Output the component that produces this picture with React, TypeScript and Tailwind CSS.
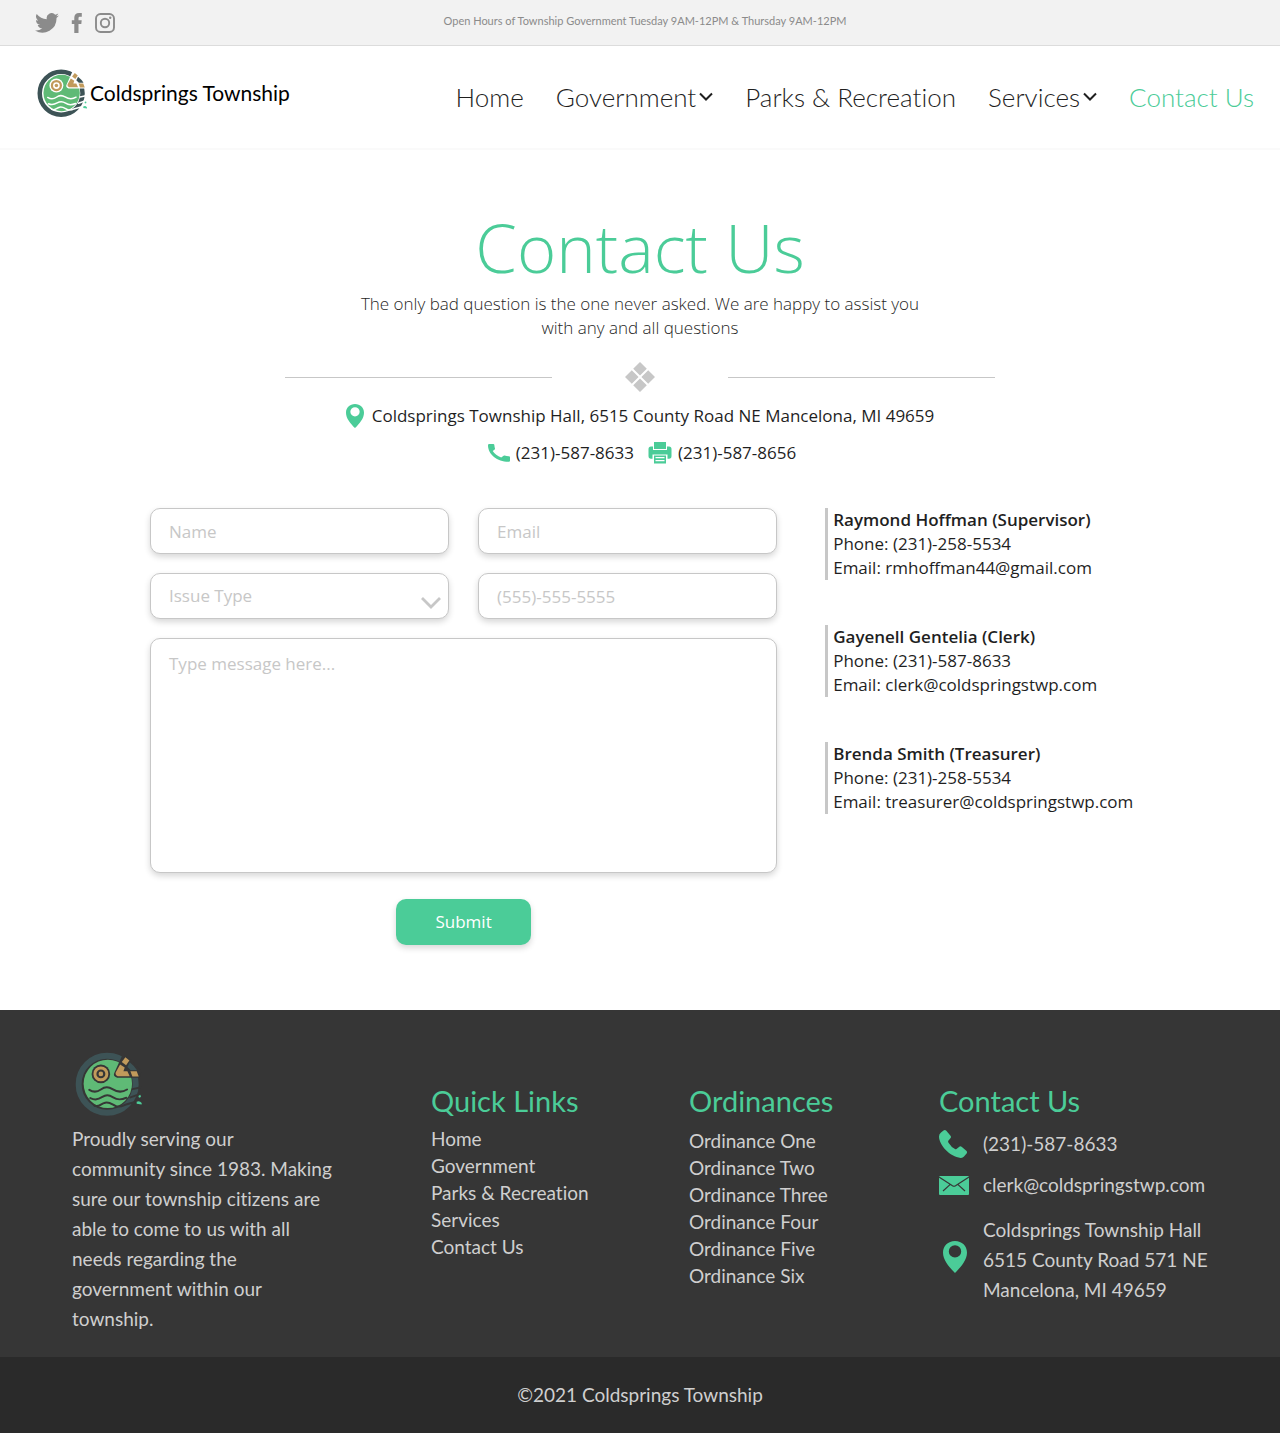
import React from "react";

const links = ["Home", "Government", "Parks & Recreation", "Services", "Contact Us"];
const ordinances = ["One", "Two", "Three", "Four", "Five", "Six"];
const officers = [
  { name: "Raymond Hoffman (Supervisor)", phone: "(231)-258-5534", email: "rmhoffman44@gmail.com" },
  { name: "Gayenell Gentelia (Clerk)", phone: "(231)-587-8633", email: "clerk@coldspringstwp.com" },
  { name: "Brenda Smith (Treasurer)", phone: "(231)-258-5534", email: "treasurer@coldspringstwp.com" },
];

function Logo({ gap, className }: { gap: string; className: string }) {
  return (
    <svg viewBox="45 37 205 196" className={className} aria-hidden="true">
      <circle cx="142" cy="134" r="86" fill="none" stroke="#3d5356" strokeWidth="18" />
      <circle cx="144" cy="133" r="73" fill="#5fba76" />
      <circle cx="123" cy="103" r="28" fill={gap} />
      <circle cx="123" cy="103" r="18" fill="none" stroke="#c19a5b" strokeWidth="9" />
      <circle cx="123" cy="103" r="7" fill="#c19a5b" />
      <path d="M188 46 L212 58 L246 96 L240 115 L172 115 Q158 110 164 99 Z" fill={gap} />
      <path d="M197 53 L209 63 L199 77 L186 67 Z" fill="#c19a5b" />
      <path d="M181 75 L195 84 L191 95 L203 95 L210 110 L174 110 Q165 106 168 98 Z" fill="#c19a5b" />
      <path d="M212 95 L231 95 L237 111 L218 111 Z" fill="#c19a5b" />
      <path d="M210 68 Q224 79 232 92 L213 92 L203 82 Z" fill="#3d5356" />
      <g fill="none" stroke={gap} strokeWidth="6" strokeLinecap="round">
        <path d="M88 151 C102 160 112 158 123 150 S144 140 158 149 S186 160 202 150" />
        <path d="M91 176 C106 183 114 180 126 173 S146 165 160 174 S184 182 200 175" />
        <path d="M104 199 C118 204 122 193 136 190 S158 196 168 200 S184 202 194 197" />
        <path d="M218 149 L242 144" />
        <path d="M212 174 L240 164" />
        <path d="M196 196 L226 188" />
      </g>
      <path d="M236 170 L242 166 L244 173 L238 175 Z M231 187 Q240 183 246 191 L246 195 L231 193 Z" fill="#4dcc98" />
    </svg>
  );
}

function Chevron({ className }: { className: string }) {
  return (
    <svg viewBox="0 0 14 10" className={className} fill="none" stroke="currentColor" strokeWidth="2" aria-hidden="true">
      <path d="M1 1.5 L7 7.5 L13 1.5" />
    </svg>
  );
}

function Pin({ className }: { className: string }) {
  return (
    <svg viewBox="0 0 24 32" className={className} fill="currentColor" aria-hidden="true">
      <path fillRule="evenodd" d="M12 0C5 0 0 5 0 11.5C0 19 6 26 12 32C18 26 24 19 24 11.5C24 5 19 0 12 0ZM12 4.2A6.2 6.2 0 1 1 12 16.6A6.2 6.2 0 1 1 12 4.2Z" />
    </svg>
  );
}

function Social() {
  const cls = "block text-[#8b8b8b]";
  return (
    <div className="flex items-center gap-3 pl-[35px]">
      <a href="#twitter" aria-label="Twitter" className={cls}>
        <svg viewBox="0 0 24 20" className="h-5 w-6" fill="currentColor" aria-hidden="true">
          <path d="M24 2.4a9.8 9.8 0 0 1-2.8.8A4.9 4.9 0 0 0 23.300.5a9.900 9.900 0 0 1-3.100 1.200A4.920 4.920 0 0 0 11.800 6.200 14 14 0 0 1 1.700.9 4.900 4.900 0 0 0 3.200 7.500a4.900 4.900 0 0 1-2.200-.6 4.900 4.900 0 0 0 3.900 4.900 5 5 0 0 1-2.200.1 4.900 4.900 0 0 0 4.600 3.400A9.900 9.900 0 0 1 0 17.400 14 14 0 0 0 21.500 5z" />
        </svg>
      </a>
      <a href="#facebook" aria-label="Facebook" className={cls}>
        <svg viewBox="0 0 12 20" className="h-5 w-3" fill="currentColor" aria-hidden="true">
          <path d="M3.300 20V11H.8V7.300H3.300V4.600C3.300 1.700 5 0 8 0H10.800V3.700H9C7.800 3.700 7.500 4.200 7.500 5.200V7.300H10.700L10.300 11H7.500V20Z" />
        </svg>
      </a>
      <a href="#instagram" aria-label="Instagram" className={cls}>
        <svg viewBox="0 0 20 20" className="h-5 w-5" fill="none" stroke="currentColor" strokeWidth="1.900" aria-hidden="true">
          <rect x="1" y="1" width="18" height="18" rx="4.500" />
          <circle cx="10" cy="10" r="4.200" />
          <circle cx="15.200" cy="4.800" r="1.200" fill="currentColor" stroke="none" />
        </svg>
      </a>
    </div>
  );
}

const field =
  "h-[46px] w-full rounded-[10px] border border-[#c7c7c7] bg-white px-[18px] text-[17px] text-[#333] placeholder:text-[#c7c7c7] shadow-[0_3px_6px_rgba(0,0,0,0.16)] outline-none";

export default function App() {
  return (
    <div className="bg-white font-['Open_Sans',sans-serif] text-[#1f1f1f] [font-variant-ligatures:none]">
      <div className="grid h-[46px] grid-cols-[1fr_auto_1fr] items-center border-b border-[#dcdcdc] bg-[#f2f2f2] font-['Lato',sans-serif]">
        <Social />
        <p className="pb-[2px] pl-[10px] text-[11px] text-[#8b8b8b]">
          Open Hours of Township Government Tuesday 9AM-12PM &amp; Thursday 9AM-12PM
        </p>
      </div>

      <header className="flex h-[104px] items-center justify-between border-b-2 border-[#fafafa] pr-[26px] pl-[37px] font-['Lato',sans-serif]">
        <a href="#home" className="flex items-center gap-[2px] pb-2 text-[21px] text-black">
          <Logo gap="#ffffff" className="h-[49px] w-[51px]" />
          Coldsprings Township
        </a>
        <nav className="flex items-center gap-8 text-[26px] font-light">
          {links.map((l) => (
            <a key={l} href={"#" + l} className={l === "Contact Us" ? "text-[#4bcc98]" : "flex items-center gap-[3px]"}>
              {l}
              {(l === "Government" || l === "Services") && <Chevron className="h-[10px] w-[14px]" />}
            </a>
          ))}
        </nav>
      </header>

      <main className="px-[150px] pb-[65px]">
        <section className="flex flex-col items-center pt-[55px] text-center text-[17px]">
          <h1 className="text-[67px] leading-[84px] font-light text-[#4bcc98]">Contact Us</h1>
          <p className="mt-[3px] max-w-[580px] leading-6 font-light">
            The only bad question is the one never asked. We are happy to assist you with any and all questions
          </p>
          <div className="mt-[22px] flex items-center gap-[73px]">
            <span className="h-px w-[267px] bg-[#c7c7c7]" />
            <svg viewBox="0 0 30 30" className="h-[30px] w-[30px]" fill="#c7c7c7" aria-hidden="true">
              <path d="M15 0 L21.800 6.800 L15 13.600 L8.200 6.800Z M15 16.400 L21.800 23.200 L15 30 L8.200 23.200Z M6.800 8.200 L13.600 15 L6.800 21.800 L0 15Z M23.200 8.200 L30 15 L23.200 21.800 L16.400 15Z" />
            </svg>
            <span className="h-px w-[267px] bg-[#c7c7c7]" />
          </div>
          <address className="mt-3 flex items-center gap-2 leading-6 not-italic">
            <Pin className="h-6 w-[18px] text-[#4bcc98]" />
            Coldsprings Township Hall, 6515 County Road NE Mancelona, MI 49659
          </address>
          <div className="mt-[13px] flex items-center gap-[14px] pl-1 leading-6">
            <span className="flex items-center gap-[6px]">
              <svg viewBox="0 0 22 18" className="h-[18px] w-[22px] text-[#4bcc98]" fill="currentColor" aria-hidden="true">
                <path d="M1.200 0H5.300Q6.200 0 6.300.8Q6.500 3 7 4.500Q7.100 5 6.700 5.400L4.700 7Q7.500 11.300 13.200 13.400L15.600 11.700Q16 11.400 16.600 11.500Q18.500 12 20.800 12.200Q22 12.300 22 13V16.800Q22 17.800 20.900 17.800C9.500 18 0 10.500 0 1.200Q0 0 1.200 0Z" />
              </svg>
              (231)-587-8633
            </span>
            <span className="flex items-center gap-[6px]">
              <svg viewBox="0 0 24 22" className="h-[22px] w-6 text-[#4bcc98]" fill="currentColor" aria-hidden="true">
                <path d="M6 0H18V7H6Z M3 4.500H5V8H19V4.500H21Q23.500 4.500 23.500 7V14Q23.500 16.800 21 16.800H19.500V12.500H4.500V16.800H3Q.5 16.800.5 14V7Q.5 4.500 3 4.500Z" />
                <path fillRule="evenodd" d="M6 13.500H18V21.500H6Z M7.500 15V16.200H16.500V15Z M7.500 18V19.200H16.500V18Z" />
              </svg>
              (231)-587-8656
            </span>
          </div>
        </section>

        <div className="mt-[43px] flex items-start gap-12">
          <form className="grid w-[64%] shrink-0 grid-cols-2 gap-x-[29px] gap-y-[19px]" onSubmit={(e) => e.preventDefault()}>
            <input aria-label="Name" type="text" placeholder="Name" className={field} />
            <input aria-label="Email" type="email" placeholder="Email" className={field} />
            <div className="relative">
              <select aria-label="Issue Type" defaultValue="" className={field + " appearance-none text-[#c7c7c7]!"}>
                <option value="">Issue Type</option>
              </select>
              <svg viewBox="0 0 20 12" className="pointer-events-none absolute right-2 bottom-[10px] h-3 w-5 text-[#c7c7c7]" fill="none" stroke="currentColor" strokeWidth="2.800" aria-hidden="true">
                <path d="M1 1 L10 10 L19 1" />
              </svg>
            </div>
            <input aria-label="Phone number" type="tel" placeholder="(555)-555-5555" className={field} />
            <textarea aria-label="Message" placeholder="Type message here..." className={field + " col-span-2 h-[235px]! resize-none py-3"} />
            <button type="submit" className="col-span-2 mt-[7px] h-[46px] w-[135px] justify-self-center rounded-[10px] bg-[#4bcc98] text-[17px] text-white shadow-[0_3px_6px_rgba(0,0,0,0.16)]">
              Submit
            </button>
          </form>
          <ul className="flex flex-col gap-[45px] text-[17px] leading-6 whitespace-nowrap">
            {officers.map((o) => (
              <li key={o.name} className="border-l-3 border-[#c7c7c7] pl-[5px]">
                <h2 className="font-semibold">{o.name}</h2>
                <p>Phone: {o.phone}</p>
                <p>Email: {o.email}</p>
              </li>
            ))}
          </ul>
        </div>
      </main>

      <footer className="bg-[#363636] font-['Lato',sans-serif] text-[19px] text-[#cfcfcf]">
        <div className="grid grid-cols-[359fr_258fr_250fr_269fr] px-[72px] pt-[42px] pb-[23px]">
          <div>
            <Logo gap="#363636" className="ml-[3px] h-[65px] w-[68px]" />
            <p className="mt-[7px] leading-[30px]">
              Proudly serving our<br />community since 1983. Making<br />sure our township citizens are<br />able to come to us with all<br />
              needs regarding the<br />government within our<br />township.
            </p>
          </div>
          <div className="pt-[31px]">
            <h2 className="text-[29px] leading-9 text-[#4bcc98]">Quick Links</h2>
            <ul className="mt-[6px] leading-[27px]">
              {links.map((l) => (
                <li key={l}><a href={"#" + l}>{l}</a></li>
              ))}
            </ul>
          </div>
          <div className="pt-[31px]">
            <h2 className="text-[29px] leading-9 text-[#4bcc98]">Ordinances</h2>
            <ul className="mt-2 leading-[27px]">
              {ordinances.map((o) => (
                <li key={o}><a href={"#ordinance-" + o}>Ordinance {o}</a></li>
              ))}
            </ul>
          </div>
          <div className="pt-[31px] whitespace-nowrap">
            <h2 className="text-[29px] leading-9 text-[#4bcc98]">Contact Us</h2>
            <div className="mt-[10px] grid grid-cols-[30px_1fr] items-center gap-x-[14px] leading-[30px]">
              <svg viewBox="0 0 28 28" className="h-7 w-7 text-[#4bcc98]" fill="currentColor" aria-hidden="true">
                <path d="M2 2.500L4.500.5Q6-.6 7.300.8L11.500 5.800Q12.500 7 11.400 8.300L9.500 10.500Q8.700 11.500 9.500 12.800Q12.300 17.300 16 19Q17.200 19.500 18.100 18.600L20 16.900Q21.300 15.900 22.600 16.800L27.300 20.700Q28.600 22 27.600 23.500L25 26.600Q23.800 28 21.700 27.900C11 27 0 15 0 6.500Q0 4 2 2.500Z" />
              </svg>
              <span>(231)-587-8633</span>
              <svg viewBox="0 0 30 19" className="mt-[11px] h-[19px] w-[30px]" aria-hidden="true">
                <rect width="30" height="19" rx="1" fill="#4bcc98" />
                <path d="M0 1 L13.500 9.800 Q15 10.700 16.500 9.800 L30 1 M4 15 L11 8.600 M26 15 L19 8.600" fill="none" stroke="#363636" strokeWidth="1.200" />
              </svg>
              <a href="mailto:clerk@coldspringstwp.com" className="mt-[11px]">clerk@coldspringstwp.com</a>
              <Pin className="mt-2 ml-1 h-8 w-6 text-[#4bcc98]" />
              <address className="mt-[15px] not-italic">
                Coldsprings Township Hall<br />6515 County Road 571 NE<br />Mancelona, MI 49659
              </address>
            </div>
          </div>
        </div>
        <div className="flex h-[76px] items-center justify-center bg-[#2a2a2a]">©2021 Coldsprings Township</div>
      </footer>
    </div>
  );
}
